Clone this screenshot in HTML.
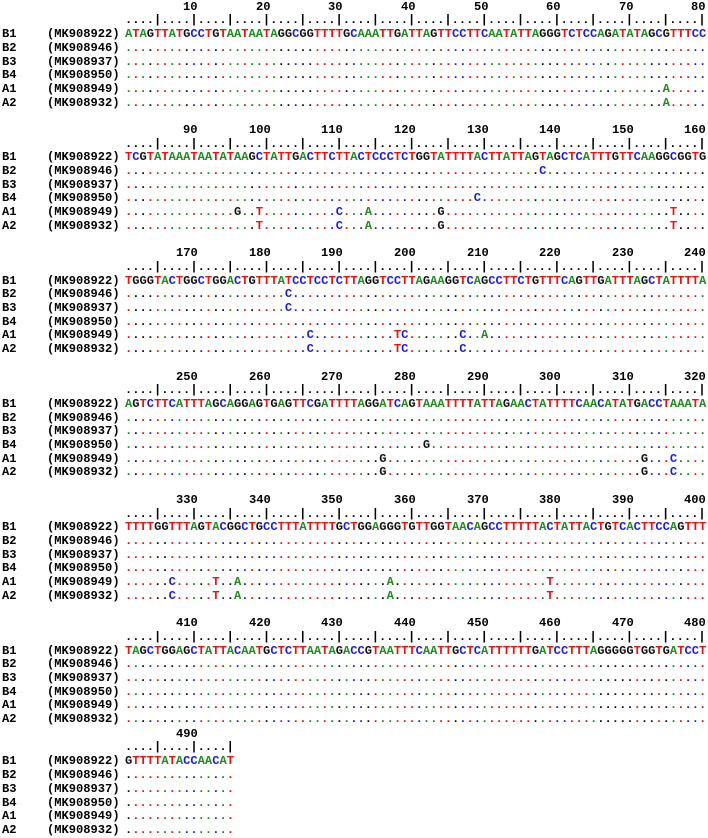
<!DOCTYPE html>
<html><head><meta charset="utf-8">
<style>
html,body{margin:0;padding:0;background:#fff;}
body{width:708px;height:837px;position:relative;overflow:hidden;font-family:"Liberation Mono",monospace;font-weight:bold;font-size:12.1px;color:#000;}
.blk{position:absolute;left:0;width:708px;}
.row{position:relative;height:13.7px;line-height:13.7px;white-space:pre;}
.last .row{height:13.8px;line-height:13.8px;}
.lb{position:absolute;left:2px;top:0;}
.ac{position:absolute;left:47px;top:0;}
.sq{position:absolute;left:125px;top:0;letter-spacing:0;}
.n{position:absolute;top:0;}
.A{color:#1d8c1d}.T{color:#ee1111}.C{color:#1a1aee}.G{color:#111}
</style></head><body>

<div class="blk" style="top:0.75px">
<div class="row"><span class="n" style="left:183px">10</span><span class="n" style="left:256px">20</span><span class="n" style="left:328px">30</span><span class="n" style="left:401px">40</span><span class="n" style="left:474px">50</span><span class="n" style="left:546px">60</span><span class="n" style="left:619px">70</span><span class="n" style="left:691px">80</span></div>
<div class="row"><span class="sq">....|....|....|....|....|....|....|....|....|....|....|....|....|....|....|....|</span></div>
<div class="row"><span class="lb">B1</span><span class="ac">(MK908922)</span><span class="sq ref">ATAGTTATGCCTGTAATAATAGGCGGTTTTGCAAATTGATTAGTTCCTTCAATATTAGGGTCTCCAGATATAGCGTTTCC</span></div>
<div class="row"><span class="lb">B2</span><span class="ac">(MK908946)</span><span class="sq var">................................................................................</span></div>
<div class="row"><span class="lb">B3</span><span class="ac">(MK908937)</span><span class="sq var">................................................................................</span></div>
<div class="row"><span class="lb">B4</span><span class="ac">(MK908950)</span><span class="sq var">................................................................................</span></div>
<div class="row"><span class="lb">A1</span><span class="ac">(MK908949)</span><span class="sq var">..........................................................................A.....</span></div>
<div class="row"><span class="lb">A2</span><span class="ac">(MK908932)</span><span class="sq var">..........................................................................A.....</span></div>
</div>

<div class="blk" style="top:124.05px">
<div class="row"><span class="n" style="left:183px">90</span><span class="n" style="left:249px">100</span><span class="n" style="left:321px">110</span><span class="n" style="left:394px">120</span><span class="n" style="left:467px">130</span><span class="n" style="left:539px">140</span><span class="n" style="left:612px">150</span><span class="n" style="left:684px">160</span></div>
<div class="row"><span class="sq">....|....|....|....|....|....|....|....|....|....|....|....|....|....|....|....|</span></div>
<div class="row"><span class="lb">B1</span><span class="ac">(MK908922)</span><span class="sq ref">TCGTATAAATAATATAAGCTATTGACTTCTTACTCCCTCTGGTATTTTACTTATTAGTAGCTCATTTGTTCAAGGCGGTG</span></div>
<div class="row"><span class="lb">B2</span><span class="ac">(MK908946)</span><span class="sq var">.........................................................C......................</span></div>
<div class="row"><span class="lb">B3</span><span class="ac">(MK908937)</span><span class="sq var">................................................................................</span></div>
<div class="row"><span class="lb">B4</span><span class="ac">(MK908950)</span><span class="sq var">................................................C...............................</span></div>
<div class="row"><span class="lb">A1</span><span class="ac">(MK908949)</span><span class="sq var">...............G..T..........C...A.........G...............................T....</span></div>
<div class="row"><span class="lb">A2</span><span class="ac">(MK908932)</span><span class="sq var">..................T..........C...A.........G...............................T....</span></div>
</div>

<div class="blk" style="top:247.35px">
<div class="row"><span class="n" style="left:176px">170</span><span class="n" style="left:249px">180</span><span class="n" style="left:321px">190</span><span class="n" style="left:394px">200</span><span class="n" style="left:467px">210</span><span class="n" style="left:539px">220</span><span class="n" style="left:612px">230</span><span class="n" style="left:684px">240</span></div>
<div class="row"><span class="sq">....|....|....|....|....|....|....|....|....|....|....|....|....|....|....|....|</span></div>
<div class="row"><span class="lb">B1</span><span class="ac">(MK908922)</span><span class="sq ref">TGGGTACTGGCTGGACTGTTTATCCTCCTCTTAGGTCCTTAGAAGGTCAGCCTTCTGTTTCAGTTGATTTAGCTATTTTA</span></div>
<div class="row"><span class="lb">B2</span><span class="ac">(MK908946)</span><span class="sq var">......................C.........................................................</span></div>
<div class="row"><span class="lb">B3</span><span class="ac">(MK908937)</span><span class="sq var">......................C.........................................................</span></div>
<div class="row"><span class="lb">B4</span><span class="ac">(MK908950)</span><span class="sq var">................................................................................</span></div>
<div class="row"><span class="lb">A1</span><span class="ac">(MK908949)</span><span class="sq var">.........................C...........TC.......C..A..............................</span></div>
<div class="row"><span class="lb">A2</span><span class="ac">(MK908932)</span><span class="sq var">.........................C...........TC.......C.................................</span></div>
</div>

<div class="blk" style="top:370.65px">
<div class="row"><span class="n" style="left:176px">250</span><span class="n" style="left:249px">260</span><span class="n" style="left:321px">270</span><span class="n" style="left:394px">280</span><span class="n" style="left:467px">290</span><span class="n" style="left:539px">300</span><span class="n" style="left:612px">310</span><span class="n" style="left:684px">320</span></div>
<div class="row"><span class="sq">....|....|....|....|....|....|....|....|....|....|....|....|....|....|....|....|</span></div>
<div class="row"><span class="lb">B1</span><span class="ac">(MK908922)</span><span class="sq ref">AGTCTTCATTTAGCAGGAGTGAGTTCGATTTTAGGATCAGTAAATTTTATTAGAACTATTTTCAACATATGACCTAAATA</span></div>
<div class="row"><span class="lb">B2</span><span class="ac">(MK908946)</span><span class="sq var">................................................................................</span></div>
<div class="row"><span class="lb">B3</span><span class="ac">(MK908937)</span><span class="sq var">................................................................................</span></div>
<div class="row"><span class="lb">B4</span><span class="ac">(MK908950)</span><span class="sq var">.........................................G......................................</span></div>
<div class="row"><span class="lb">A1</span><span class="ac">(MK908949)</span><span class="sq var">...................................G...................................G...C....</span></div>
<div class="row"><span class="lb">A2</span><span class="ac">(MK908932)</span><span class="sq var">...................................G...................................G...C....</span></div>
</div>

<div class="blk" style="top:493.95px">
<div class="row"><span class="n" style="left:176px">330</span><span class="n" style="left:249px">340</span><span class="n" style="left:321px">350</span><span class="n" style="left:394px">360</span><span class="n" style="left:467px">370</span><span class="n" style="left:539px">380</span><span class="n" style="left:612px">390</span><span class="n" style="left:684px">400</span></div>
<div class="row"><span class="sq">....|....|....|....|....|....|....|....|....|....|....|....|....|....|....|....|</span></div>
<div class="row"><span class="lb">B1</span><span class="ac">(MK908922)</span><span class="sq ref">TTTTGGTTTAGTACGGCTGCCTTTATTTTGCTGGAGGGTGTTGGTAACAGCCTTTTTACTATTACTGTCACTTCCAGTTT</span></div>
<div class="row"><span class="lb">B2</span><span class="ac">(MK908946)</span><span class="sq var">................................................................................</span></div>
<div class="row"><span class="lb">B3</span><span class="ac">(MK908937)</span><span class="sq var">................................................................................</span></div>
<div class="row"><span class="lb">B4</span><span class="ac">(MK908950)</span><span class="sq var">................................................................................</span></div>
<div class="row"><span class="lb">A1</span><span class="ac">(MK908949)</span><span class="sq var">......C.....T..A....................A.....................T.....................</span></div>
<div class="row"><span class="lb">A2</span><span class="ac">(MK908932)</span><span class="sq var">......C.....T..A....................A.....................T.....................</span></div>
</div>

<div class="blk" style="top:617.25px">
<div class="row"><span class="n" style="left:176px">410</span><span class="n" style="left:249px">420</span><span class="n" style="left:321px">430</span><span class="n" style="left:394px">440</span><span class="n" style="left:467px">450</span><span class="n" style="left:539px">460</span><span class="n" style="left:612px">470</span><span class="n" style="left:684px">480</span></div>
<div class="row"><span class="sq">....|....|....|....|....|....|....|....|....|....|....|....|....|....|....|....|</span></div>
<div class="row"><span class="lb">B1</span><span class="ac">(MK908922)</span><span class="sq ref">TAGCTGGAGCTATTACAATGCTCTTAATAGACCGTAATTTCAATTGCTCATTTTTTGATCCTTTAGGGGGTGGTGATCCT</span></div>
<div class="row"><span class="lb">B2</span><span class="ac">(MK908946)</span><span class="sq var">................................................................................</span></div>
<div class="row"><span class="lb">B3</span><span class="ac">(MK908937)</span><span class="sq var">................................................................................</span></div>
<div class="row"><span class="lb">B4</span><span class="ac">(MK908950)</span><span class="sq var">................................................................................</span></div>
<div class="row"><span class="lb">A1</span><span class="ac">(MK908949)</span><span class="sq var">................................................................................</span></div>
<div class="row"><span class="lb">A2</span><span class="ac">(MK908932)</span><span class="sq var">................................................................................</span></div>
</div>

<div class="blk last" style="top:727.6px">
<div class="row"><span class="n" style="left:176px">490</span></div>
<div class="row"><span class="sq">....|....|....|</span></div>
<div class="row"><span class="lb">B1</span><span class="ac">(MK908922)</span><span class="sq ref">GTTTTATACCAACAT</span></div>
<div class="row"><span class="lb">B2</span><span class="ac">(MK908946)</span><span class="sq var">...............</span></div>
<div class="row"><span class="lb">B3</span><span class="ac">(MK908937)</span><span class="sq var">...............</span></div>
<div class="row"><span class="lb">B4</span><span class="ac">(MK908950)</span><span class="sq var">...............</span></div>
<div class="row"><span class="lb">A1</span><span class="ac">(MK908949)</span><span class="sq var">...............</span></div>
<div class="row"><span class="lb">A2</span><span class="ac">(MK908932)</span><span class="sq var">...............</span></div>
</div>

<script>
document.querySelectorAll('.blk').forEach(function(b){
  var refEl=b.querySelector('.ref'); var ref=refEl.textContent;
  function wrap(s){
    var h='';
    for(var i=0;i<s.length;i++){
      var c=s[i]; var k=(c==='.')?ref[i]:c;
      h+='<span class="'+k+'">'+c+'</span>';
    }
    return h;
  }
  refEl.innerHTML=wrap(ref);
  b.querySelectorAll('.var').forEach(function(v){v.innerHTML=wrap(v.textContent);});
});
</script>
</body></html>
